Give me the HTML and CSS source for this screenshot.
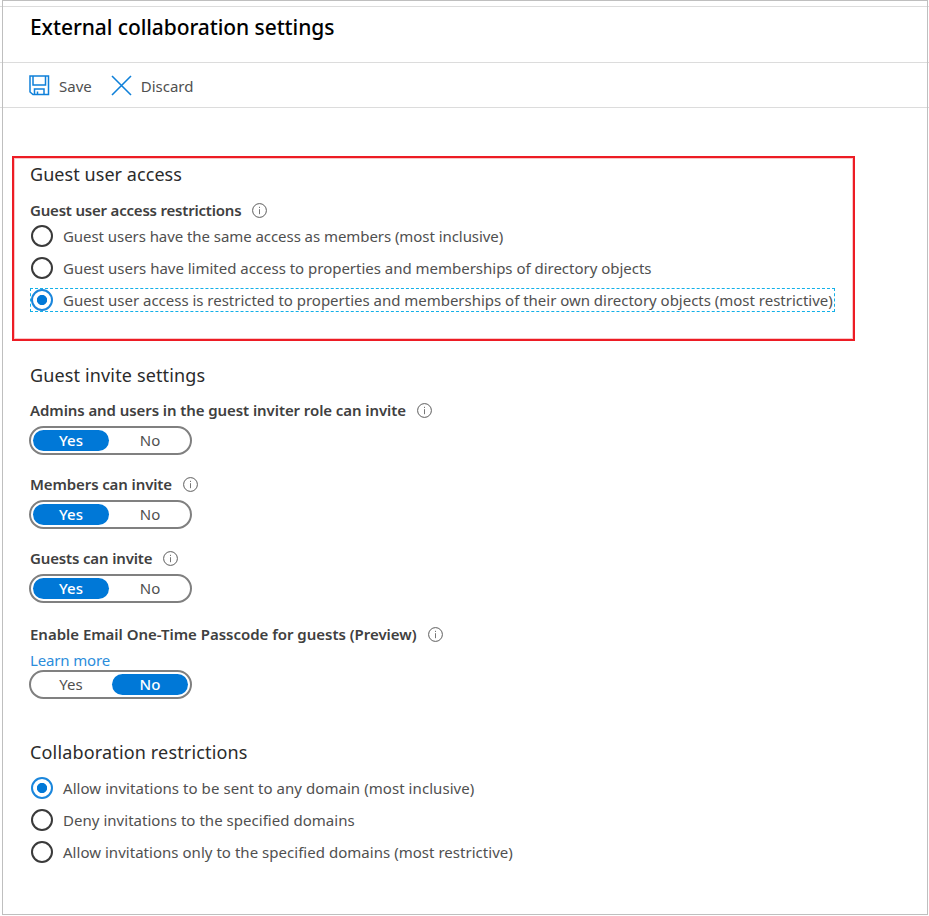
FILE: index.html
```html
<!DOCTYPE html>
<html lang="en">
<head>
<meta charset="utf-8">
<title>External collaboration settings</title>
<link rel="stylesheet" href="styles.css">
</head>
<body>
<svg class="defs" aria-hidden="true">
  <symbol id="info" viewBox="0 0 15 15"><circle cx="7.5" cy="7.5" r="6.9" fill="none" stroke="#5c5c5c"/><path d="M7.5 6.2v5M7.5 3.8v1.2" stroke="#777" fill="none"/></symbol>
</svg>
<div class="page">
  <header class="header"><h1><span class="t-title">External collaboration settings</span></h1></header>
  <nav class="toolbar">
    <button class="command"><svg width="21" height="21" viewBox="0 0 21 21" fill="none" stroke="#0f80d9" stroke-width="1.5"><path d="M1 1h18.500v18.500H4L1 17zM4 1v9h12.500V1M5.500 19.500v-5.500h9.500v5.500M8.500 19.500v-3"/></svg><span>Save</span></button>
    <button class="command"><svg width="21" height="21" viewBox="0 0 21 21" fill="none" stroke="#0f80d9" stroke-width="1.6"><path d="M1 1l19 19M20 1L1 20"/></svg><span>Discard</span></button>
  </nav>
  <main>
    <section class="access">
      <h2><span class="t-access">Guest user access</span></h2>
      <h3><span class="t-restrict">Guest user access restrictions</span><svg class="info"><use href="#info"/></svg></h3>
      <div class="radio"><i class="dot"></i><span class="t-same">Guest users have the same access as members (most inclusive)</span></div>
      <div class="radio"><i class="dot"></i><span class="t-limited">Guest users have limited access to properties and memberships of directory objects</span></div>
      <div class="radio focused"><i class="dot on"></i><span class="t-own">Guest user access is restricted to properties and memberships of their own directory objects (most restrictive)</span></div>
    </section>
    <section class="invite">
      <h2><span class="t-invite">Guest invite settings</span></h2>
      <div class="field"><h3><span class="t-admins">Admins and users in the guest inviter role can invite</span><svg class="info"><use href="#info"/></svg></h3>
        <div class="switch"><b>Yes</b><span>No</span></div></div>
      <div class="field"><h3><span class="t-members">Members can invite</span><svg class="info"><use href="#info"/></svg></h3>
        <div class="switch"><b>Yes</b><span>No</span></div></div>
      <div class="field last-invite"><h3><span class="t-guests">Guests can invite</span><svg class="info"><use href="#info"/></svg></h3>
        <div class="switch"><b>Yes</b><span>No</span></div></div>
      <div class="field"><h3><span class="t-otp">Enable Email One-Time Passcode for guests (Preview)</span><svg class="info"><use href="#info"/></svg></h3>
        <a class="learn">Learn more</a>
        <div class="switch"><span>Yes</span><b>No</b></div></div>
    </section>
    <section class="collab">
      <h2><span class="t-collab">Collaboration restrictions</span></h2>
      <div class="radio"><i class="dot on"></i><span class="t-any">Allow invitations to be sent to any domain (most inclusive)</span></div>
      <div class="radio"><i class="dot"></i><span class="t-deny">Deny invitations to the specified domains</span></div>
      <div class="radio"><i class="dot"></i><span class="t-only">Allow invitations only to the specified domains (most restrictive)</span></div>
    </section>
  </main>
  <div class="frame"></div>
</div>
</body>
</html>
```
FILE: styles.css
```css
* { box-sizing: border-box; }
body { margin: 0; background: #fff; font: 15px/24px "Noto Sans", "Open Sans", sans-serif; color: #505050; }
h1, h2, h3 { margin: 0; white-space: nowrap; display: flex; align-items: center; }
.defs { position: absolute; width: 0; height: 0; }
.page { position: relative; width: 929px; height: 916px; padding-top: 6px; overflow: hidden; }
.frame { position: absolute; left: 2px; top: 0; width: 926px; height: 915px; border: 1px solid #bfbfbf; pointer-events: none; }
.header { height: 56px; border-top: 1px solid #dcdcdc; padding: 4px 0 0 30px; }
h1 { font-size: 21px; line-height: 32px; font-weight: 500; color: #000; }
.toolbar { height: 46px; border-top: 1px solid #dcdcdc; border-bottom: 1px solid #dcdcdc; padding: 0 0 0 29px; display: flex; align-items: center; gap: 19px; }
.command { display: flex; align-items: center; gap: 9px; padding: 0; border: 0; background: none; font: inherit; color: #505050; }
.command span { padding-top: 1px; }
main { padding-top: 48px; }
.access { margin-left: 12px; width: 843px; height: 185px; border: 2px solid #ed1c24; padding: 2px 0 0 16px; box-shadow: inset 0 0 0 1px rgba(237, 28, 36, .25); }
.invite, .collab { padding-left: 30px; }
.invite { margin-top: 20px; }
.collab { margin-top: 39px; }
h2 { height: 28px; font-size: 18px; font-weight: 400; color: #2b2b2b; }
h3 { height: 24px; font-size: 15px; font-weight: 600; color: #404040; gap: 11px; }
.access h3 { margin: 10px 0 2px; }
.info { width: 15px; height: 15px; flex: none; }
.radio { display: flex; align-items: center; height: 24px; width: max-content; margin-bottom: 8px; padding: 0 1px 0 0; gap: 10px; white-space: nowrap; border: 1px dashed transparent; }
.focused { border-color: #13b0e8; }
.dot { width: 22px; height: 22px; border: 2px solid #3a3a3a; border-radius: 50%; flex: none; }
.dot.on { border-color: #1a86dc; background: radial-gradient(circle, #0078d7 4.7px, #fff 5.5px); }
.field { margin-bottom: 17px; }
.last-invite { margin-bottom: 19px; }
.invite h2 { margin-bottom: 9px; }
.switch { display: flex; gap: 3px; width: 163px; height: 29px; border: 2px solid #808080; border-radius: 15px; padding: 2px; margin: 4px 0 0 -1px; text-align: center; line-height: 20px; }
.switch b, .switch span { width: 76px; height: 21px; }
.switch b { border-radius: 11px; background: #0078d7; color: #fff; font-weight: 500; }
.learn { display: block; height: 24px; margin-top: 2px; color: #2b8ddb; letter-spacing: -.15px; }
.learn + .switch { margin-top: -2px; }
.collab h2 { margin-bottom: 10px; }
.t-title { letter-spacing: -.08px; }
.t-restrict { letter-spacing: -.2px; }
.t-admins { letter-spacing: -.08px; }
.t-members { letter-spacing: -.11px; }
.t-guests { letter-spacing: -.15px; }
.t-otp { letter-spacing: -.02px; }
.t-access { letter-spacing: .06px; }
.t-invite { letter-spacing: .14px; }
.t-collab { letter-spacing: .16px; }
.t-same { letter-spacing: -.06px; }
.t-limited, .t-own { letter-spacing: -.015px; }
.t-any { letter-spacing: .06px; }
.t-only, .t-deny { letter-spacing: .03px; }
```
